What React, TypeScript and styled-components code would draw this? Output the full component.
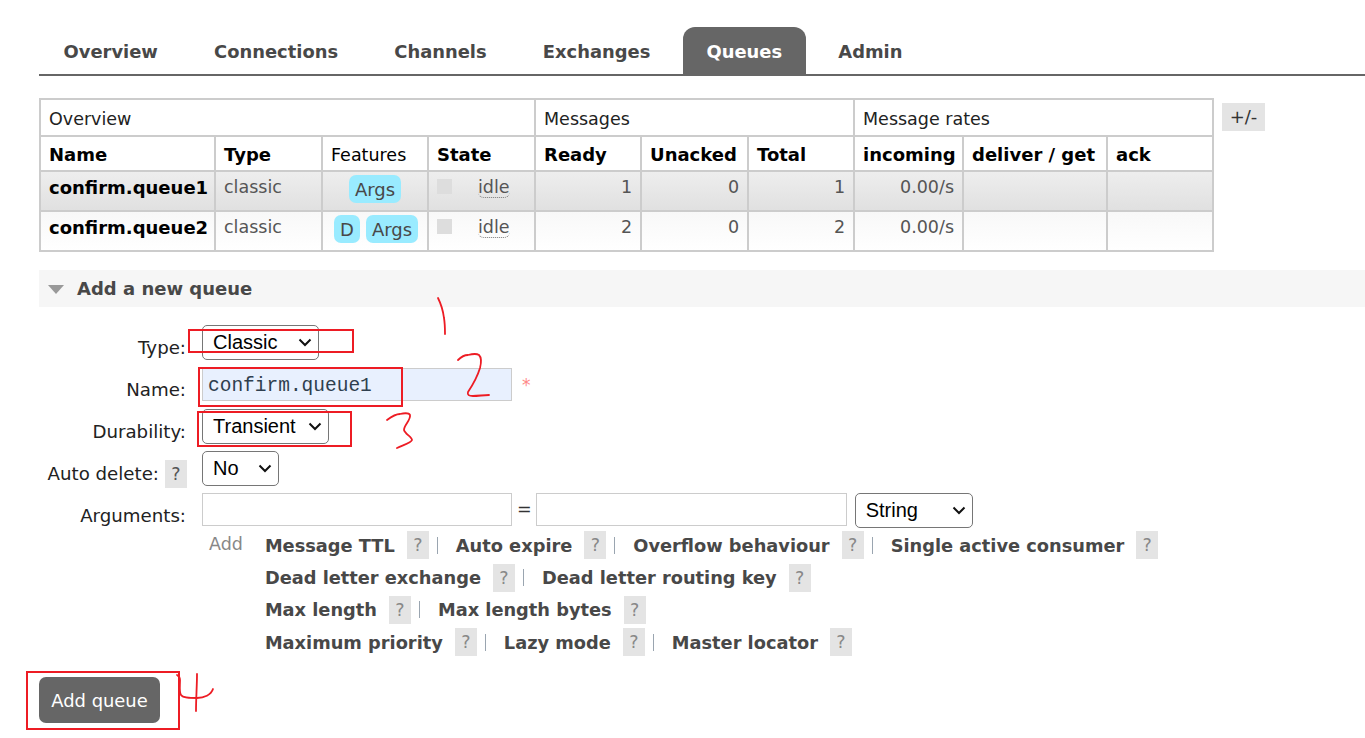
import React from 'react'
import styled, { createGlobalStyle } from 'styled-components'

const tabs = ['Overview', 'Connections', 'Channels', 'Exchanges', 'Queues', 'Admin']

const queues = [
  { name: 'confirm.queue1', features: ['Args'], ready: 1, total: 1, shaded: true },
  { name: 'confirm.queue2', features: ['D', 'Args'], ready: 2, total: 2, shaded: false },
]

const helpRows = [
  ['Message TTL', 'Auto expire', 'Overflow behaviour', 'Single active consumer'],
  ['Dead letter exchange', 'Dead letter routing key'],
  ['Max length', 'Max length bytes'],
  ['Maximum priority', 'Lazy mode', 'Master locator'],
]

const GlobalStyle = createGlobalStyle`
  html, body {
    margin: 0;
    padding: 0;
    background: #fff;
    overflow: hidden;
  }
  body {
    font-family: "DejaVu Sans", Verdana, sans-serif;
    font-size: 17.5px;
    color: #484848;
  }
`

const Page = styled.div`
  position: relative;
  width: 1365px;
  height: 738px;
  padding: 27px 0 0 39px;
  box-sizing: border-box;
  overflow: hidden;
`

const Nav = styled.nav`
  display: flex;
  gap: 9px;
  height: 47px;
  border-bottom: 2px solid #666;
  padding-left: 1px;
`

const Tab = styled.a<{ $active?: boolean }>`
  display: flex;
  align-items: center;
  padding: 2px 23.6px 0;
  font-size: 17.9px;
  font-weight: bold;
  color: ${(props) => (props.$active ? '#fff' : '#484848')};
  background: ${(props) => (props.$active ? '#666' : 'transparent')};
  border-radius: 12px 12px 0 0;
`

const TableRow = styled.div`
  display: flex;
  align-items: flex-start;
  gap: 8px;
  margin-top: 22px;
`

const QueueTable = styled.table`
  width: 1173px;
  table-layout: fixed;
  border-collapse: collapse;
  border: 2px solid #ccc;
  font-size: 17.5px;
`

const GroupCell = styled.th`
  height: 37px;
  padding: 2px 8px 0;
  box-sizing: border-box;
  border: 2px solid #ccc;
  font-weight: normal;
  text-align: left;
  color: #222;
`

const HeadCell = styled.th<{ $plain?: boolean }>`
  height: 35px;
  padding: 2px 8px 0;
  box-sizing: border-box;
  border: 2px solid #ccc;
  text-align: left;
  color: #000;
  font-size: ${(props) => (props.$plain ? '17.5px' : '18px')};
  font-weight: ${(props) => (props.$plain ? 'normal' : 'bold')};
  white-space: nowrap;
`

const QueueRow = styled.tr<{ $shaded: boolean }>`
  height: 40px;
  background: ${(props) =>
    props.$shaded
      ? 'linear-gradient(#eeeeee, #e0e0e0)'
      : 'linear-gradient(#f8f8f8, #ffffff)'};
`

const Cell = styled.td<{ $right?: boolean }>`
  padding: 5px 8px 0 8px;
  box-sizing: border-box;
  vertical-align: top;
  border: 2px solid #ccc;
  white-space: nowrap;
  text-align: ${(props) => (props.$right ? 'right' : 'left')};
  color: #555;
`

const NameCell = styled(Cell)`
  font-size: 18px;
  font-weight: bold;
  color: #000;
`

const FeatureCell = styled(Cell)`
  padding-top: 3px;
  text-align: center;
`

const Badge = styled.span`
  display: inline-block;
  padding: 0 6px;
  margin: 0 3px;
  height: 28px;
  line-height: 30px;
  font-size: 18px;
  border-radius: 7px;
  background: #99ebff;
  color: #484848;
`

const StateBox = styled.span`
  display: inline-block;
  width: 15px;
  height: 15px;
  margin-right: 26px;
  vertical-align: -1px;
  background: #ddd;
`

const Idle = styled.span`
  border-bottom: 1px dotted #777;
  border-radius: 0 0 6px 6px;
`

const PlusMinus = styled.button`
  all: unset;
  margin-top: 5px;
  width: 43px;
  height: 28px;
  line-height: 28px;
  text-align: center;
  font-size: 18px;
  background: #e4e4e4;
  color: #333;
`

const SectionHeader = styled.h2`
  display: flex;
  align-items: center;
  gap: 13px;
  margin: 18px 0 0;
  padding: 0 0 0 9px;
  height: 37px;
  background: #f6f6f6;
  font-size: 18px;
  font-weight: bold;
  color: #484848;
`

const Triangle = styled.span`
  width: 0;
  height: 0;
  margin-top: 2px;
  border-left: 8px solid transparent;
  border-right: 8px solid transparent;
  border-top: 9px solid #999;
`

const Form = styled.div`
  display: flex;
  flex-direction: column;
  gap: 7px;
  margin-top: 18px;
`

const FormRow = styled.div`
  display: flex;
  align-items: flex-start;
  gap: 16px;
`

const Label = styled.label`
  display: flex;
  justify-content: flex-end;
  align-items: center;
  gap: 6px;
  width: 147px;
  height: 35px;
  font-size: 18.2px;
  color: #222;
  white-space: nowrap;
  padding-top: 10px;
  box-sizing: border-box;
`

const SelectWrap = styled.div<{ $width: number; $offset?: number }>`
  position: relative;
  width: ${(props) => props.$width}px;
  height: 35px;
  margin-left: ${(props) => props.$offset ?? 0}px;
`

const Select = styled.select`
  appearance: none;
  display: block;
  width: 100%;
  height: 100%;
  padding: 0 0 2px 10px;
  font-family: "Liberation Sans", Arial, sans-serif;
  font-size: 20px;
  color: #000;
  background: #fff;
  border: 1px solid #767676;
  border-radius: 5px;
`

const Chevron = styled.svg`
  position: absolute;
  top: 13px;
  right: 7px;
  pointer-events: none;
`

const TextField = styled.input<{ $width: number; $filled?: boolean }>`
  width: ${(props) => props.$width}px;
  height: 33px;
  margin-top: ${(props) => (props.$filled ? '1px' : '0')};
  padding: 2px 5px 0;
  box-sizing: border-box;
  border: 1px solid #ccc;
  background: ${(props) => (props.$filled ? '#e8f0fe' : '#fff')};
  font-family: "Liberation Mono", "Courier New", monospace;
  font-size: 19.5px;
  color: #2f3f4f;
  outline: none;
`

const Required = styled.span`
  align-self: center;
  margin-left: -6px;
  color: #f88;
  font-size: 17px;
`

const ArgumentFields = styled.div`
  display: flex;
  align-items: flex-start;
  gap: 5px;
`

const Equals = styled.span`
  padding-top: 6px;
  margin-right: -1px;
  color: #333;
`

const HelpArea = styled.div`
  display: flex;
  gap: 22px;
  margin: -7px 0 0 170px;
`

const AddLink = styled.span`
  color: #888;
  padding-top: 6px;
`

const HelpList = styled.div`
  display: flex;
  flex-direction: column;
  gap: 4px;
  padding-top: 3px;
`

const HelpLine = styled.div`
  display: flex;
  align-items: center;
  height: 28.4px;
`

const HelpText = styled.span`
  font-size: 17.8px;
  font-weight: bold;
  color: #484848;
  margin-right: 12px;
  white-space: nowrap;
`

const HelpMark = styled.span`
  display: inline-block;
  width: 22px;
  height: 28px;
  line-height: 28px;
  font-size: 17.5px;
  text-align: center;
  background: #e4e4e4;
  color: #888;
`

const LabelMark = styled(HelpMark)`
  margin-right: -1px;
  color: #555;
`

const Divider = styled.span`
  width: 1px;
  height: 17px;
  margin: 0 18px 0 8px;
  background: #9aa5b0;
`

const SubmitButton = styled.button`
  display: block;
  width: 121px;
  height: 46px;
  margin-top: 20px;
  padding: 1px 0 0;
  border: none;
  border-radius: 7px;
  background: #666;
  color: #fff;
  font-family: "DejaVu Sans", Verdana, sans-serif;
  font-size: 17.9px;
`

const RedBox = styled.div<{ $x: number; $y: number; $w: number; $h: number }>`
  position: absolute;
  left: ${(props) => props.$x}px;
  top: ${(props) => props.$y}px;
  width: ${(props) => props.$w}px;
  height: ${(props) => props.$h}px;
  box-sizing: border-box;
  border: 2px solid #ed1c24;
  pointer-events: none;
`

const Scribbles = styled.svg`
  position: absolute;
  left: 0;
  top: 0;
  pointer-events: none;
`

const Dropdown: React.FC<{ width: number; value: string; options: string[]; offset?: number }> = ({
  width,
  value,
  options,
  offset,
}) => (
  <SelectWrap $width={width} $offset={offset}>
    <Select defaultValue={value}>
      {options.map((option) => (
        <option key={option}>{option}</option>
      ))}
    </Select>
    <Chevron width="14" height="9" viewBox="0 0 14 9" fill="none" stroke="#111" strokeWidth="2">
      <path d="M1.5 1.5 L7 7 L12.5 1.5" />
    </Chevron>
  </SelectWrap>
)

const App: React.FC = () => {
  return (
    <Page>
      <GlobalStyle />
      <Nav>
        {tabs.map((tab) => (
          <Tab key={tab} $active={tab === 'Queues'}>
            {tab}
          </Tab>
        ))}
      </Nav>

      <TableRow>
        <QueueTable>
          <colgroup>
            {[175, 107, 106, 107, 106, 107, 106, 109, 144, 106].map((w, i) => (
              <col key={i} style={{ width: w }} />
            ))}
          </colgroup>
          <thead>
            <tr>
              <GroupCell colSpan={4}>Overview</GroupCell>
              <GroupCell colSpan={3}>Messages</GroupCell>
              <GroupCell colSpan={3}>Message rates</GroupCell>
            </tr>
            <tr>
              <HeadCell>Name</HeadCell>
              <HeadCell>Type</HeadCell>
              <HeadCell $plain>Features</HeadCell>
              <HeadCell>State</HeadCell>
              <HeadCell>Ready</HeadCell>
              <HeadCell>Unacked</HeadCell>
              <HeadCell>Total</HeadCell>
              <HeadCell>incoming</HeadCell>
              <HeadCell>deliver / get</HeadCell>
              <HeadCell>ack</HeadCell>
            </tr>
          </thead>
          <tbody>
            {queues.map((queue) => (
              <QueueRow key={queue.name} $shaded={queue.shaded}>
                <NameCell>{queue.name}</NameCell>
                <Cell>classic</Cell>
                <FeatureCell>
                  {queue.features.map((feature) => (
                    <Badge key={feature}>{feature}</Badge>
                  ))}
                </FeatureCell>
                <Cell>
                  <StateBox />
                  <Idle>idle</Idle>
                </Cell>
                <Cell $right>{queue.ready}</Cell>
                <Cell $right>0</Cell>
                <Cell $right>{queue.total}</Cell>
                <Cell $right>0.00/s</Cell>
                <Cell />
                <Cell />
              </QueueRow>
            ))}
          </tbody>
        </QueueTable>
        <PlusMinus>+/-</PlusMinus>
      </TableRow>

      <SectionHeader>
        <Triangle />
        Add a new queue
      </SectionHeader>

      <Form>
        <FormRow>
          <Label>Type:</Label>
          <Dropdown width={117} value="Classic" options={['Classic', 'Quorum']} />
        </FormRow>
        <FormRow>
          <Label>Name:</Label>
          <TextField $width={310} $filled defaultValue="confirm.queue1" />
          <Required>*</Required>
        </FormRow>
        <FormRow>
          <Label>Durability:</Label>
          <Dropdown width={127} value="Transient" options={['Durable', 'Transient']} />
        </FormRow>
        <FormRow>
          <Label>
            Auto delete: <LabelMark>?</LabelMark>
          </Label>
          <Dropdown width={77} value="No" options={['No', 'Yes']} />
        </FormRow>
        <FormRow>
          <Label>Arguments:</Label>
          <ArgumentFields>
            <TextField $width={310} />
            <Equals>=</Equals>
            <TextField $width={311} />
            <Dropdown width={118} offset={3} value="String" options={['String', 'Number', 'Boolean']} />
          </ArgumentFields>
        </FormRow>
        <HelpArea>
          <AddLink>Add</AddLink>
          <HelpList>
            {helpRows.map((row) => (
              <HelpLine key={row[0]}>
                {row.map((item, i) => (
                  <React.Fragment key={item}>
                    {i > 0 && <Divider />}
                    <HelpText>{item}</HelpText>
                    <HelpMark>?</HelpMark>
                  </React.Fragment>
                ))}
              </HelpLine>
            ))}
          </HelpList>
        </HelpArea>
      </Form>

      <SubmitButton>Add queue</SubmitButton>

      <RedBox $x={188} $y={329} $w={166} $h={24} />
      <RedBox $x={198} $y={367} $w={205} $h={40} />
      <RedBox $x={197} $y={411} $w={155} $h={36} />
      <RedBox $x={26} $y={671} $w={154} $h={59} />
      <Scribbles width="1365" height="738" fill="none" stroke="#ed1c24" strokeWidth="1.8" strokeLinecap="round" strokeLinejoin="round">
        <path d="M438 298 C441 304 443 310 444 318 C445 324 445 329 445 334" />
        <path d="M458 360 C461 357 464 355 468 355 C472 354 476 353 479 355 C482 358 481 364 480 368 C477 378 472 386 468 392 C467 395 469 396 473 396 C478 396 484 395 489 395" />
        <path d="M387 420 C391 417 395 414 400 414 C404 413 409 413 410 415 C411 420 404 425 404 430 C405 434 412 437 412 440 C411 443 403 445 397 448" />
        <path d="M177 675 C179 676 180 677 180 680 C180 686 179 692 181 695 C183 698 190 698 197 698 C204 698 211 695 213 689" />
        <path d="M197 674 C197 686 196 698 196 711" />
      </Scribbles>
    </Page>
  )
}

export default App
